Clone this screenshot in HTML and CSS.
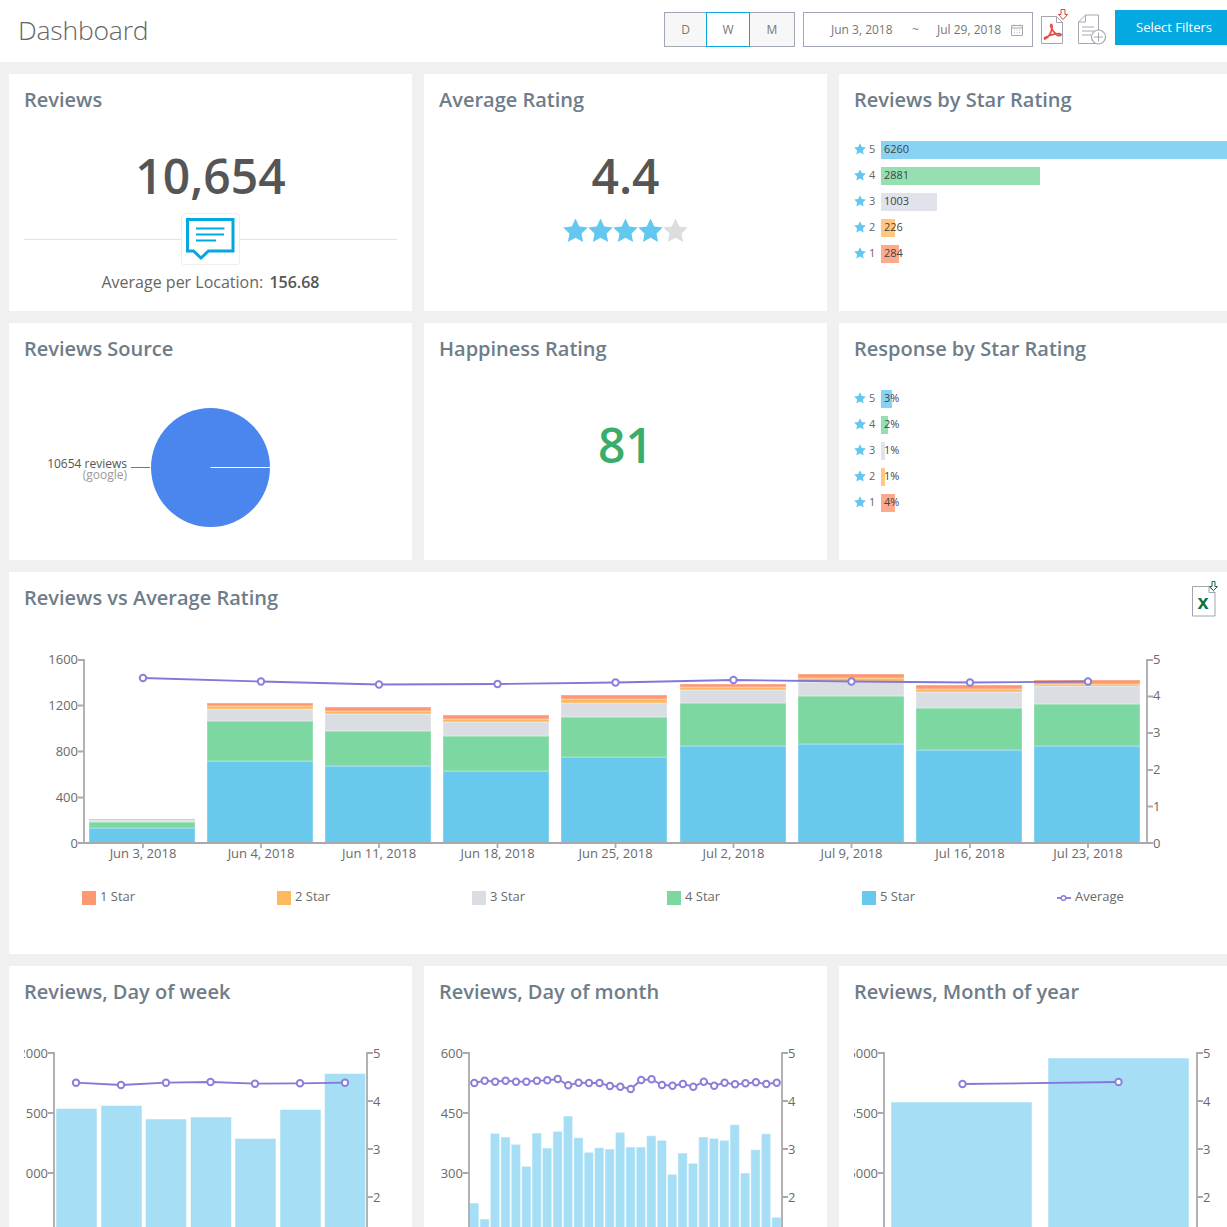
FILE: index.html
```html
<!DOCTYPE html>
<html lang="en">
<head>
<meta charset="utf-8">
<title>Dashboard</title>
<link rel="stylesheet" href="styles.css">
</head>
<body>
<svg class="defs" width="0" height="0" aria-hidden="true">
  <defs>
    <marker id="dot" markerUnits="userSpaceOnUse" markerWidth="10" markerHeight="10" refX="5" refY="5"><circle cx="5" cy="5" r="3.200" fill="#fff" stroke="#8a80db" stroke-width="2"/></marker>
    <marker id="dot-sm" markerUnits="userSpaceOnUse" markerWidth="8" markerHeight="8" refX="4" refY="4"><circle cx="4" cy="4" r="2.300" fill="#fff" stroke="#8a80db" stroke-width="1.500"/></marker>
    <symbol id="star" viewBox="1 1 22 22"><path d="M12 1.500l3.300 6.900 7.500 1-5.500 5.200 1.400 7.500L12 18.400l-6.700 3.700 1.400-7.500L1.200 9.400l7.500-1z"/></symbol>
  </defs>
</svg>
<header class="topbar">
  <h1 class="page-title">Dashboard</h1>
  <div class="controls">
    <div class="segment">
      <span class="seg seg-d">D</span>
      <span class="seg seg-w">W</span>
      <span class="seg seg-m">M</span>
    </div>
    <div class="date-box">
      <span class="date-from">Jun 3, 2018</span>
      <span class="date-sep">~</span>
      <span class="date-to">Jul 29, 2018</span>
      <svg class="cal" width="12" height="12" viewBox="0 0 12 12"><path d="M.5 1.500h11v10H.5zM.5 4h11M3 .5v2M9 .5v2" fill="none" stroke="#a8a8a8"/><path d="M3 6h1M5.500 6h1M8 6h1M3 8.500h1M5.500 8.500h1M8 8.500h1" stroke="#c4c4c4"/></svg>
    </div>
    <svg class="pdf-icon" width="28" height="36" viewBox="0 0 28 36">
      <path d="M1.500 7.500h15l6 6v21h-21zM16.500 7.500v6h6" fill="none" stroke="#a0a5b0" stroke-width="1"/>
      <path d="M5 30c3-1.500 6-6 7-10.500.4-2-.2-4.500-1-4-1 1 .5 6 6 10.500 1.500 1 4.500 1 4-.5-.5-1.500-8-1-16 3-1 .5 0 2 0 1.500z" fill="none" stroke="#e4504a" stroke-width="1.700"/>
      <path d="M21 .5h4v5h2.500L23 10.500l-4.500-5H21z" fill="#fff" stroke="#d8403c" stroke-width="1"/>
    </svg>
    <svg class="add-icon" width="30" height="32" viewBox="0 0 30 32">
      <path d="M1.500 8l7-7h13v17M21.500 29.500h-20V8h7V1" fill="none" stroke="#a5a8b0"/>
      <path d="M5 13h12M5 17h12M5 21h9" stroke="#a5a8b0"/>
      <circle cx="21.500" cy="23" r="7" fill="#fff" stroke="#a5a8b0" stroke-width="1.200"/>
      <path d="M21.500 18.500v9M17 23h9" stroke="#a5a8b0"/>
    </svg>
    <button class="filter-btn" type="button">Select Filters</button>
  </div>
</header>

<main class="grid">
  <section class="card">
    <h2 class="card-title">Reviews</h2>
    <div class="big-num big-first">10,654</div>
    <div class="sep">
      <span class="sep-line"></span>
      <span class="sep-icon">
        <svg width="57" height="50" viewBox="0 0 57 50"><path d="M5.500 5.500H51V37H26.500L19 44l-7.500-7h-6z" fill="#fff" stroke="#04a8df" stroke-width="3"/><path d="M14 14.500h28.500M14 20.500h28M14 26.500h20" stroke="#04a8df" stroke-width="2"/></svg>
      </span>
      <span class="sep-line"></span>
    </div>
    <p class="avg-loc">Average per Location: <b>156.68</b></p>
  </section>

  <section class="card">
    <h2 class="card-title">Average Rating</h2>
    <div class="big-num big-first">4.4</div>
    <div class="stars">
      <svg class="lg-star on"><use href="#star"/></svg>
      <svg class="lg-star on"><use href="#star"/></svg>
      <svg class="lg-star on"><use href="#star"/></svg>
      <svg class="lg-star on"><use href="#star"/></svg>
      <svg class="lg-star off"><use href="#star"/></svg>
    </div>
  </section>

  <section class="card">
    <h2 class="card-title">Reviews by Star Rating</h2>
    <ul class="rows">
      <li class="row"><svg class="sm-star"><use href="#star"/></svg><span class="row-n">5</span><span class="bar c5" style="width:346px">6260</span></li>
      <li class="row"><svg class="sm-star"><use href="#star"/></svg><span class="row-n">4</span><span class="bar c4" style="width:159px">2881</span></li>
      <li class="row"><svg class="sm-star"><use href="#star"/></svg><span class="row-n">3</span><span class="bar c3" style="width:56px">1003</span></li>
      <li class="row"><svg class="sm-star"><use href="#star"/></svg><span class="row-n">2</span><span class="bar c2" style="width:14px">226</span></li>
      <li class="row"><svg class="sm-star"><use href="#star"/></svg><span class="row-n">1</span><span class="bar c1" style="width:18px">284</span></li>
    </ul>
  </section>

  <section class="card">
    <h2 class="card-title">Reviews Source</h2>
    <svg class="pie" width="373" height="170" viewBox="24 380 373 170">
      <circle cx="210.500" cy="467.500" r="59.500" fill="#4a86ed"/>
      <path d="M210.500 467.500H270" stroke="#fff" stroke-width="1"/>
      <path d="M131 467.500h19" stroke="#777" stroke-width="1"/>
      <text class="pie-a" x="127" y="468" text-anchor="end">10654 reviews</text>
      <text class="pie-b" x="127" y="479" text-anchor="end">(google)</text>
    </svg>
  </section>

  <section class="card">
    <h2 class="card-title">Happiness Rating</h2>
    <div class="big-num happy">81</div>
  </section>

  <section class="card">
    <h2 class="card-title">Response by Star Rating</h2>
    <ul class="rows">
      <li class="row"><svg class="sm-star"><use href="#star"/></svg><span class="row-n">5</span><span class="bar c5" style="width:11px">3%</span></li>
      <li class="row"><svg class="sm-star"><use href="#star"/></svg><span class="row-n">4</span><span class="bar c4" style="width:7px">2%</span></li>
      <li class="row"><svg class="sm-star"><use href="#star"/></svg><span class="row-n">3</span><span class="bar c3" style="width:4px">1%</span></li>
      <li class="row"><svg class="sm-star"><use href="#star"/></svg><span class="row-n">2</span><span class="bar c2" style="width:4px">1%</span></li>
      <li class="row"><svg class="sm-star"><use href="#star"/></svg><span class="row-n">1</span><span class="bar c1" style="width:14px">4%</span></li>
    </ul>
  </section>

  <section class="card card-wide">
    <h2 class="card-title">Reviews vs Average Rating</h2>
    <svg class="xls" width="28" height="36" viewBox="0 0 28 36">
      <path d="M.5 5.500H17l6 6v23.500H.5z" fill="#fff" stroke="#a0a5b0"/>
      <path d="M17 5.500v6h6" fill="none" stroke="#a0a5b0"/>
      <text class="xls-x" x="5.500" y="28">x</text>
      <path d="M20 .5h3v5h2.500L21.500 9.500l-4-4H20z" fill="#fff" stroke="#0d7040" stroke-width="1"/>
    </svg>
    <svg class="chart-main" width="1218" height="330" viewBox="9 624 1218 330">
      <g class="s5">
        <rect x="89" y="828" width="106" height="15"/><rect x="207" y="761" width="106" height="82"/><rect x="325" y="766" width="106" height="77"/><rect x="443" y="771" width="106" height="72"/><rect x="561" y="757" width="106" height="86"/><rect x="680" y="746" width="106" height="97"/><rect x="798" y="744" width="106" height="99"/><rect x="916" y="750" width="106" height="93"/><rect x="1034" y="746" width="106" height="97"/>
      </g>
      <g class="s4">
        <rect x="89" y="822" width="106" height="6"/><rect x="207" y="721" width="106" height="40"/><rect x="325" y="731" width="106" height="35"/><rect x="443" y="736" width="106" height="35"/><rect x="561" y="717" width="106" height="40"/><rect x="680" y="703" width="106" height="43"/><rect x="798" y="696" width="106" height="48"/><rect x="916" y="708" width="106" height="42"/><rect x="1034" y="704" width="106" height="42"/>
      </g>
      <g class="s3">
        <rect x="89" y="820" width="106" height="2"/><rect x="207" y="709" width="106" height="12"/><rect x="325" y="714" width="106" height="17"/><rect x="443" y="722" width="106" height="14"/><rect x="561" y="703" width="106" height="14"/><rect x="680" y="690" width="106" height="13"/><rect x="798" y="682" width="106" height="14"/><rect x="916" y="692" width="106" height="16"/><rect x="1034" y="686" width="106" height="18"/>
      </g>
      <g class="s2">
        <rect x="207" y="706" width="106" height="3"/><rect x="325" y="711" width="106" height="3"/><rect x="443" y="719" width="106" height="3"/><rect x="561" y="699" width="106" height="4"/><rect x="680" y="687" width="106" height="3"/><rect x="798" y="678" width="106" height="4"/><rect x="916" y="689" width="106" height="3"/><rect x="1034" y="684" width="106" height="2"/>
      </g>
      <g class="s1">
        <rect x="89" y="819" width="106" height="1"/><rect x="207" y="703" width="106" height="3"/><rect x="325" y="707" width="106" height="4"/><rect x="443" y="715" width="106" height="4"/><rect x="561" y="695" width="106" height="4"/><rect x="680" y="684" width="106" height="3"/><rect x="798" y="674" width="106" height="4"/><rect x="916" y="685" width="106" height="4"/><rect x="1034" y="680" width="106" height="4"/>
      </g>
      <path class="axis" d="M78 660h6V843H78M78 705.500h6M78 751.500h6M78 797.500h6"/>
      <path class="axis" d="M1153 660h-6V843H1153M1153 696.500h-6M1153 733h-6M1153 770h-6M1153 806.500h-6"/>
      <path class="axis" d="M84 843H1147M143 843v5M261 843v5M379 843v5M497.500 843v5M615.500 843v5M733.500 843v5M851.500 843v5M970 843v5M1088 843v5"/>
      <polyline class="avg" points="143,678 261,681.500 379,684.500 497.500,684 615.500,682.500 733.500,680 851.500,681.500 970,682.500 1088,681.500" marker-start="url(#dot)" marker-mid="url(#dot)" marker-end="url(#dot)"/>
      <g class="tick tick-end">
        <text x="78" y="663.500">1600</text><text x="78" y="710">1200</text><text x="78" y="756">800</text><text x="78" y="802">400</text><text x="78" y="847.500">0</text>
      </g>
      <g class="tick">
        <text x="1153" y="663.500">5</text><text x="1153" y="700">4</text><text x="1153" y="737">3</text><text x="1153" y="774">2</text><text x="1153" y="811">1</text><text x="1153" y="847.500">0</text>
      </g>
      <g class="tick tick-mid">
        <text x="143" y="858">Jun 3, 2018</text><text x="261" y="858">Jun 4, 2018</text><text x="379" y="858">Jun 11, 2018</text><text x="497.500" y="858">Jun 18, 2018</text><text x="615.500" y="858">Jun 25, 2018</text><text x="733.500" y="858">Jul 2, 2018</text><text x="851.500" y="858">Jul 9, 2018</text><text x="970" y="858">Jul 16, 2018</text><text x="1088" y="858">Jul 23, 2018</text>
      </g>
      <rect class="s1f" x="82" y="891" width="14" height="14"/><text class="tick" x="100" y="901">1 Star</text>
      <rect class="s2f" x="277" y="891" width="14" height="14"/><text class="tick" x="295" y="901">2 Star</text>
      <rect class="s3f" x="472" y="891" width="14" height="14"/><text class="tick" x="490" y="901">3 Star</text>
      <rect class="s4f" x="667" y="891" width="14" height="14"/><text class="tick" x="685" y="901">4 Star</text>
      <rect class="s5f" x="862" y="891" width="14" height="14"/><text class="tick" x="880" y="901">5 Star</text>
      <polyline class="avg" points="1057,898 1063.500,898 1071,898" marker-mid="url(#dot-sm)"/>
      <text class="tick" x="1075" y="901">Average</text>
    </svg>
  </section>

  <section class="card">
    <h2 class="card-title">Reviews, Day of week</h2>
    <svg class="chart-sm" width="373" height="209" viewBox="24 1018 373 209">
      <g class="light">
        <rect x="56" y="1108.500" width="41" height="132"/><rect x="101" y="1105.500" width="41" height="135"/><rect x="145.500" y="1119" width="41" height="121"/><rect x="190.500" y="1117" width="41" height="123"/><rect x="235" y="1138.500" width="41" height="101"/><rect x="280" y="1109.500" width="41" height="131"/><rect x="324.500" y="1073.500" width="41" height="167"/>
      </g>
      <path class="axis" d="M48 1053h6V1227M48 1113h6M48 1173h6"/>
      <path class="axis" d="M373 1053h-6V1227M373 1101h-6M373 1149h-6M373 1197h-6"/>
      <polyline class="avg" points="76,1082.700 121,1085 166,1082.700 210.500,1082 255,1083.700 300,1083.300 345,1082.700" marker-start="url(#dot)" marker-mid="url(#dot)" marker-end="url(#dot)"/>
      <g class="tick tick-end"><text x="48" y="1058">2000</text><text x="48" y="1118">1500</text><text x="48" y="1178">1000</text></g>
      <g class="tick"><text x="373" y="1058">5</text><text x="373" y="1106">4</text><text x="373" y="1154">3</text><text x="373" y="1202">2</text></g>
    </svg>
  </section>

  <section class="card">
    <h2 class="card-title">Reviews, Day of month</h2>
    <svg class="chart-sm" width="373" height="209" viewBox="439 1018 373 209">
      <g class="light">
        <rect x="469.500" y="1203" width="9.400" height="37"/><rect x="479.900" y="1219" width="9.400" height="21"/><rect x="490.300" y="1133.300" width="9.400" height="107"/><rect x="500.800" y="1137" width="9.400" height="103"/><rect x="511.200" y="1144.300" width="9.400" height="96"/><rect x="521.600" y="1166.300" width="9.400" height="74"/><rect x="532" y="1133" width="9.400" height="107"/><rect x="542.400" y="1148" width="9.400" height="92"/><rect x="552.900" y="1131.300" width="9.400" height="109"/><rect x="563.300" y="1116" width="9.400" height="124"/><rect x="573.700" y="1137.700" width="9.400" height="102"/><rect x="584.100" y="1152.300" width="9.400" height="88"/><rect x="594.500" y="1147.700" width="9.400" height="92"/><rect x="605" y="1149" width="9.400" height="91"/><rect x="615.400" y="1132.300" width="9.400" height="108"/><rect x="625.800" y="1147" width="9.400" height="93"/><rect x="636.200" y="1147" width="9.400" height="93"/><rect x="646.600" y="1135.700" width="9.400" height="104"/><rect x="657.100" y="1140.300" width="9.400" height="100"/><rect x="667.500" y="1174.300" width="9.400" height="66"/><rect x="677.900" y="1153" width="9.400" height="87"/><rect x="688.300" y="1163.300" width="9.400" height="77"/><rect x="698.700" y="1137" width="9.400" height="103"/><rect x="709.200" y="1138.300" width="9.400" height="102"/><rect x="719.600" y="1140.300" width="9.400" height="100"/><rect x="730" y="1124.700" width="9.400" height="115"/><rect x="740.400" y="1173" width="9.400" height="67"/><rect x="750.800" y="1149.700" width="9.400" height="90"/><rect x="761.300" y="1133.700" width="9.400" height="106"/><rect x="771.700" y="1217.300" width="9.400" height="23"/>
      </g>
      <path class="axis" d="M463 1053h6V1227M463 1113h6M463 1173h6"/>
      <path class="axis" d="M788 1053h-6V1227M788 1101h-6M788 1149h-6M788 1197h-6"/>
      <polyline class="avg" points="474.300,1083 484.700,1080.700 495.200,1081.700 505.600,1080.700 516,1081.700 526.400,1081.700 536.900,1080.700 547.300,1080.300 557.700,1079 568.200,1085.300 578.600,1082.700 589,1083 599.500,1083 609.900,1086 620.300,1086.700 630.700,1089 641.200,1080 651.600,1079.300 662,1085 672.500,1085.700 682.900,1084 693.300,1086.700 703.800,1081.700 714.200,1085.700 724.600,1082.700 735,1084.300 745.500,1083.300 755.900,1082.300 766.300,1084 776.700,1082.700" marker-start="url(#dot)" marker-mid="url(#dot)" marker-end="url(#dot)"/>
      <g class="tick tick-end"><text x="463" y="1058">600</text><text x="463" y="1118">450</text><text x="463" y="1178">300</text></g>
      <g class="tick"><text x="788" y="1058">5</text><text x="788" y="1106">4</text><text x="788" y="1154">3</text><text x="788" y="1202">2</text></g>
    </svg>
  </section>

  <section class="card">
    <h2 class="card-title">Reviews, Month of year</h2>
    <svg class="chart-sm" width="373" height="209" viewBox="854 1018 373 209">
      <g class="light">
        <rect x="891" y="1102" width="141" height="138"/><rect x="1048" y="1058" width="141" height="182"/>
      </g>
      <path class="axis" d="M878 1053h6V1227M878 1113h6M878 1173h6"/>
      <path class="axis" d="M1203 1053h-6V1227M1203 1101h-6M1203 1149h-6M1203 1197h-6"/>
      <polyline class="avg" points="962.500,1084 1118.500,1082" marker-start="url(#dot)" marker-end="url(#dot)"/>
      <g class="tick tick-end"><text x="878" y="1058">6000</text><text x="878" y="1118">5500</text><text x="878" y="1178">5000</text></g>
      <g class="tick"><text x="1203" y="1058">5</text><text x="1203" y="1106">4</text><text x="1203" y="1154">3</text><text x="1203" y="1202">2</text></g>
    </svg>
  </section>
</main>
</body>
</html>
```
FILE: styles.css
```css
* { box-sizing: border-box; }
html, body { margin: 0; height: 1227px; overflow: hidden; }
body { background: #f0f0f0; font-family: "Open Sans", sans-serif; color: #666; }
.defs { position: absolute; }

.topbar { display: flex; justify-content: space-between; height: 62px; background: #fff; padding-left: 18px; }
.page-title { margin: 12px 0 0; font-size: 26.5px; line-height: 36px; font-weight: 300; color: #666; letter-spacing: -0.2px; }
.controls { display: flex; align-items: flex-start; padding-top: 12px; }
.segment { display: flex; height: 35px; border: 1px solid #a2a7b5; font-size: 12px; color: #777; }
.seg { display: flex; align-items: center; justify-content: center; background: #f7f7f7; }
.seg-d { width: 41px; }
.seg-w { position: relative; width: 44px; margin: -1px 0; background: #fff; border: 1px solid #0aa8e0; }
.seg-m { width: 44px; }
.date-box { display: flex; align-items: center; width: 230px; height: 35px; margin-left: 8px; border: 1px solid #a2a7b5; font-size: 12px; color: #777; padding-left: 27px; }
.date-from { width: 81px; }
.date-sep { width: 25px; color: #888; }
.date-to { width: 74px; }
.pdf-icon { margin: -3px 0 0 7px; }
.add-icon { margin: 2px 0 0 9px; }
.filter-btn { width: 112px; height: 35px; margin: -2px 0 0 8px; padding: 0 0 2px 6px; border: 0; background: #03a9e0; color: #fff; font: 13px "Open Sans", sans-serif; }

.grid { display: grid; grid-template-columns: repeat(3, 403px); grid-template-rows: 237px 237px 382px 400px; gap: 12px; padding: 12px 0 0 9px; }
.card { position: relative; background: #fff; padding: 15px; min-width: 0; }
.card-wide { grid-column: 1 / span 3; width: 1218px; padding: 15px 0 0; }
.card-wide .card-title { padding-left: 15px; }
.card-title { margin: 0 0 15px; font-size: 20px; line-height: 22px; font-weight: 600; color: #6e7d89; }

.big-num { font-size: 48px; line-height: 60px; font-weight: 600; color: #555; text-align: center; }
.big-first { margin-top: 35px; }
.happy { margin-top: 55px; color: #3bad6a; }

.sep { display: flex; align-items: center; margin-top: 7px; }
.sep-line { flex: 1; height: 1px; background: #e3e3e3; }
.sep-icon { display: block; width: 59px; height: 52px; border: 1px solid #eee; border-radius: 3px; }
.sep-icon svg { display: block; }
.avg-loc { margin: 6px 0 0; font-size: 16px; line-height: 22px; text-align: center; color: #666; }
.avg-loc b { margin-left: 2px; font-weight: 600; color: #555; }

.stars { display: flex; justify-content: center; margin-top: 12px; }
.lg-star { width: 25px; height: 25px; }
.on { fill: #63c8f0; }
.off { fill: #ddd; }

.rows { list-style: none; margin: 30px 0 0; padding: 0; }
.row { display: flex; align-items: flex-start; height: 18px; margin-bottom: 8px; font-size: 11px; color: #444; }
.sm-star { width: 12px; height: 12px; margin-top: 2px; fill: #63c8f0; }
.row-n { width: 15px; padding-left: 3px; line-height: 16px; color: #666; }
.bar { display: block; height: 18px; padding-left: 3px; line-height: 16px; white-space: nowrap; }
.c5 { background: #88d3f3; }
.c4 { background: #95e0b1; }
.c3 { background: #e0e3eb; }
.c2 { background: #ffc880; }
.c1 { background: #fda98b; }

.pie { display: block; margin-top: 20px; }
.pie-a { font-size: 12px; fill: #555; }
.pie-b { font-size: 12px; fill: #999; }

.xls { position: absolute; top: 9px; left: 1183px; }
.xls-x { font: 700 20px "Liberation Sans", sans-serif; fill: #0d7040; }
.chart-main, .chart-sm { display: block; }

.s5 rect, .s5f { fill: #68c9ec; }
.s4 rect, .s4f { fill: #7dd7a1; }
.s3 rect, .s3f { fill: #dadee2; }
.s2 rect, .s2f { fill: #feb95f; }
.s1 rect, .s1f { fill: #fd9873; }
.s1f, .s2f, .s3f, .s4f, .s5f { stroke: none; }
.s5 rect, .s4 rect, .s3 rect, .s2 rect, .s1 rect { stroke: rgba(255, 255, 255, 0.35); stroke-width: 1; }
.light rect { fill: #a6dff5; stroke: rgba(255, 255, 255, 0.5); stroke-width: 1; }
.axis { fill: none; stroke: #aaa; stroke-width: 1.8; }
.avg { fill: none; stroke: #8378d8; stroke-width: 1.8; }
.tick { font-size: 13px; fill: #6a6a6a; }
.tick-end { text-anchor: end; }
.tick-mid { text-anchor: middle; }
```
